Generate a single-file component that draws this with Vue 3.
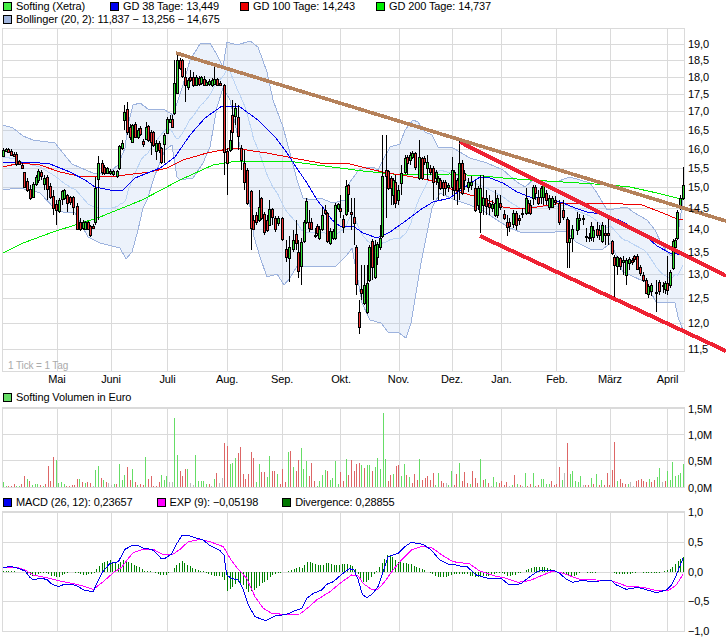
<script setup>
// price chart screen: all coordinates are page pixels, each svg sets its viewBox to its own slice of the page
const left = 2.5;
const right = 684.5;
const monthX = [57, 111, 167, 227, 282, 340, 399, 452, 501, 556, 610, 667];
const months = [
  ["Mai", 57], ["Juni", 111], ["Juli", 167.5], ["Aug.", 227], ["Sep.", 282], ["Okt.", 341],
  ["Nov.", 398.5], ["Dez.", 452], ["Jan.", 501.5], ["Feb.", 557], ["März", 610], ["April", 667.5],
];
const priceAxis = [
  ["19,0", 44], ["18,5", 60], ["18,0", 77], ["17,5", 94], ["17,0", 111], ["16,5", 130], ["16,0", 149], ["15,5", 168],
  ["15,0", 187], ["14,5", 208], ["14,0", 229], ["13,5", 252], ["13,0", 274], ["12,5", 298], ["12,0", 323], ["11,5", 349],
];
const volumeAxis = [["1,5M", 408], ["1,0M", 434], ["0,5M", 460], ["0,0M", 487]];
const macdAxis = [["1,0", 512], ["0,5", 542], ["0,0", 572], ["−0,5", 601], ["−1,0", 631]];

const priceLegend = [
  [
    { color: "#44ee44", label: "Softing (Xetra)" },
    { color: "#0000ee", label: "GD 38 Tage: 13,449" },
    { color: "#ee0000", label: "GD 100 Tage: 14,243" },
    { color: "#00ee00", label: "GD 200 Tage: 14,737" },
  ],
  [{ color: "#9fb3dc", label: "Bollinger (20, 2): 11,837 − 13,256 − 14,675" }],
];
const macdLegend = [
  { color: "#0000ee", label: "MACD (26, 12): 0,23657" },
  { color: "#ff00ff", label: "EXP (9): −0,05198" },
  { color: "#007700", label: "Divergence: 0,28855" },
];

// [x, body top, body bottom, wick top, wick bottom, green?]
const candles = [
  [3,150,156,148,157,1],[6,149,151,148,152,1],[8,149,152,148,153,0],[11,151,155,149,156,0],[14,154,156,152,157,0],[16,154,164,152,166,0],[19,161,164,160,165,0],[22,165,168,163,169,0],
  [24,172,187,172,188,0],[27,181,190,178,192,0],[30,189,198,185,200,0],[33,184,197,182,198,1],[36,177,184,175,186,1],[38,171,180,169,183,1],[41,172,176,170,180,0],[44,178,184,175,190,1],[47,177,189,175,200,0],[50,186,197,183,199,0],
  [53,196,208,190,215,0],[56,204,210,200,225,0],[59,200,211,198,213,1],[62,191,199,190,205,1],[64,190,198,189,200,1],[67,195,203,194,212,0],[70,197,202,196,205,0],[73,197,207,196,215,0],[77,206,229,203,230,0],[80,222,229,218,231,0],[83,222,228,220,230,1],[85,222,229,221,230,1],[88,222,229,221,230,0],[90,226,235,225,237,0],[93,226,228,224,229,0],
  [95,188,222,177,225,1],[98,163,179,156,220,1],[102,163,172,160,175,0],[104,167,173,165,175,0],[107,168,173,167,174,1],[110,171,173,169,175,1],[113,171,174,170,176,1],[117,171,176,170,178,1],[119,146,168,145,170,1],[122,143,148,140,150,1],
  [124,112,120,105,130,1],[127,109,132,102,135,0],[130,127,137,124,140,0],[132,125,142,124,143,1],[135,124,137,122,138,0],[138,130,137,128,139,1],[140,128,134,126,136,0],[143,141,144,139,147,0],[146,127,139,122,140,1],[148,126,140,125,142,0],[151,132,142,130,155,0],[153,132,145,131,147,0],[156,143,151,140,160,1],[159,143,150,141,153,0],[161,148,162,147,164,0],[164,135,144,133,163,1],[167,119,133,117,134,1],[170,119,122,115,123,1],[172,119,127,115,128,0],
  [174,83,113,60,115,1],[177,60,93,55,94,1],[180,60,68,58,70,0],[182,60,76,59,78,0],[185,77,85,68,102,0],[188,80,87,78,90,1],[190,77,80,70,82,0],[193,77,85,72,87,0],[196,77,85,75,86,1],[199,78,84,76,86,0],[201,77,83,76,85,1],[204,79,85,76,86,0],[206,82,85,80,86,1],[209,81,84,79,86,1],[212,80,85,78,87,1],[214,79,84,67,85,1],[217,79,85,78,86,0],[220,83,85,81,86,0],
  [224,85,152,84,175,0],[227,151,163,148,195,0],[230,140,150,130,152,1],[232,115,132,100,150,0],[235,108,116,103,125,1],[238,117,136,105,150,0],[241,148,160,145,170,0],[244,163,182,150,190,0],[247,170,203,168,205,0],
  [251,191,228,190,250,0],[253,220,229,215,230,0],[256,215,222,212,225,0],[259,207,220,190,222,1],[261,198,218,197,220,0],[264,214,232,212,235,0],[267,220,230,215,232,0],[269,209,225,200,226,1],[272,209,217,208,225,0],[275,218,229,216,232,0],[278,218,223,216,226,1],[282,218,239,217,241,0],[286,249,257,240,262,0],[289,247,258,236,282,1],[293,240,249,230,252,1],[296,234,243,220,250,0],[298,252,271,240,278,0],[301,242,266,238,285,1],[304,222,241,220,243,1],[306,201,222,198,224,1],[309,222,228,210,232,0],[311,222,229,218,230,0],[315,235,236,228,238,0],[317,226,233,224,236,0],[319,229,238,226,240,1],[322,215,229,207,231,1],[325,210,213,205,215,0],[327,213,241,212,243,0],[330,231,243,228,245,1],[333,231,238,229,240,1],[335,205,238,203,240,1],[338,204,208,203,210,1],[340,208,211,195,218,0],[343,219,227,215,233,0],[346,186,214,180,216,1],[348,185,194,184,212,0],[351,212,214,198,230,0],[354,217,223,198,245,0],
  [356,247,284,245,295,0],[359,312,327,300,334,0],[361,289,293,265,300,0],[364,285,303,265,305,1],[367,283,312,265,314,1],[369,247,280,245,282,1],[372,241,267,239,280,0],[375,245,277,240,279,1],[377,244,257,242,265,1],[380,238,247,225,250,1],[382,176,236,135,238,1],[386,170,176,135,218,0],[388,171,188,170,190,0],[391,178,188,176,205,0],[393,180,195,178,205,1],[395,182,203,175,208,0],[398,190,200,185,205,1],[401,173,183,165,195,1],[405,158,172,155,174,1],[407,157,163,155,175,0],[410,155,160,152,165,1],[412,153,157,151,159,1],[415,153,167,152,170,0],[419,157,178,140,180,1],[422,158,178,157,180,0],[424,158,162,156,165,0],[427,162,168,155,180,1],[430,168,172,165,175,0],[433,168,182,166,200,0],[436,172,178,170,185,1],[438,178,182,176,200,1],[440,180,188,178,190,0],[443,182,188,180,196,0],[445,182,188,180,195,0],[448,185,187,183,192,1],[452,170,187,157,195,1],[454,172,190,170,200,0],[457,180,190,178,205,0],[459,163,188,140,200,1],[462,163,193,160,195,0],[464,173,180,170,190,0],[468,182,187,178,192,1],[471,182,185,176,190,1],
  [475,188,210,180,212,0],[478,188,205,186,210,1],[480,188,212,175,233,1],[483,198,205,175,215,1],[486,198,206,190,215,0],[489,203,207,195,215,0],[492,204,208,200,212,1],[495,203,215,190,217,1],[497,198,215,195,218,1],[500,203,207,195,210,0],[504,214,218,210,220,0],[507,222,227,215,236,0],[509,222,226,218,232,0],[513,213,224,210,228,1],[516,213,225,211,230,0],[519,218,220,215,225,0],[522,213,214,208,218,1],[526,198,213,188,215,1],[528,203,212,200,214,0],
  [530,205,213,200,215,0],[533,187,198,185,205,1],[535,187,193,185,200,0],[538,197,203,190,205,0],[541,188,197,186,204,1],[543,185,197,182,205,1],[546,193,200,190,205,0],[549,198,207,195,210,1],[552,198,207,196,208,1],[555,200,202,196,205,0],[559,203,222,200,225,0],[563,210,217,200,220,0],[567,219,242,217,268,0],[569,238,242,220,268,1],[572,229,238,225,252,1],[577,218,230,212,235,1],[579,218,220,214,230,1],[583,218,219,215,225,0],[586,236,237,228,242,0],[589,237,238,233,242,0],[591,226,237,222,241,1],[593,230,237,226,242,1],[597,229,235,222,238,0],[599,230,235,225,240,0],[602,225,241,222,243,1],[605,233,235,225,245,0],[608,233,235,217,245,0],
  [612,241,253,240,255,0],[614,257,265,255,298,0],[617,257,266,256,275,1],[620,258,266,257,270,0],[623,260,262,256,275,1],[626,260,275,258,285,1],[629,259,263,257,270,1],[632,260,262,258,265,0],[634,256,259,255,262,0],[637,256,269,254,270,0],[640,267,273,265,276,0],[643,275,280,272,282,0],[646,280,293,278,294,0],[648,286,294,284,298,1],[651,285,291,283,296,1],[656,292,293,280,312,0],[659,282,291,280,295,0],[663,285,286,282,293,0],[665,283,289,281,294,1],[667,283,290,256,295,0],[670,272,285,270,288,1],[673,241,268,239,270,1],[675,240,247,238,250,1],[677,212,238,210,240,1],[680,198,208,195,210,1],[683,185,198,167,200,1],
];

const gd38 = [[3,163],[20,162],[40,163],[50,164],[70,172],[85,180],[95,187],[110,190],[122,191],[135,178],[160,168],[175,157],[190,135],[205,118],[222,106],[240,107],[258,120],[275,137],[285,150],[298,170],[307,183],[317,200],[325,210],[332,220],[340,226],[353,226],[363,233],[377,238],[390,232],[407,220],[420,210],[433,202],[450,198],[458,192],[468,185],[480,177],[490,178],[503,183],[517,192],[530,197],[547,198],[563,203],[575,208],[587,212],[607,215],[623,222],[642,233],[657,246],[670,253],[683,255]];
const gd100 = [[3,167],[20,163],[40,165],[60,172],[83,177],[117,176],[150,172],[167,168],[183,160],[207,153],[233,148],[267,153],[293,158],[320,163],[350,164],[370,169],[387,173],[420,178],[437,182],[453,190],[470,195],[483,198],[503,207],[517,209],[530,208],[563,203],[587,203],[603,203],[642,205],[663,213],[677,219],[683,219]];
const gd200 = [[3,253],[23,243],[53,232],[75,225],[100,217],[142,200],[180,180],[213,165],[237,161],[287,161],[317,165],[363,171],[403,175],[450,174],[483,176],[503,178],[530,180],[563,182],[610,185],[630,187],[657,193],[677,198],[683,200]];
const bandUpper = [[3,125],[13,128],[23,136],[33,140],[55,143],[63,153],[72,164],[95,174],[110,172],[118,165],[125,148],[128,125],[133,105],[140,103],[148,109],[165,110],[173,115],[183,85],[190,60],[200,44],[210,43],[217,55],[223,67],[227,42],[237,45],[250,41],[258,47],[267,72],[273,100],[283,127],[290,153],[297,180],[303,198],[312,200],[320,198],[333,203],[345,200],[350,182],[358,171],[363,167],[373,167],[378,170],[383,160],[390,147],[400,144],[405,130],[413,120],[418,122],[425,132],[432,135],[438,147],[453,148],[470,158],[487,163],[503,170],[517,182],[525,187],[533,180],[556,182],[570,177],[580,180],[590,183],[597,193],[607,210],[627,207],[633,212],[647,220],[655,230],[662,245],[671,256],[677,240],[683,200]];
const bandLower = [[3,190],[17,188],[30,190],[40,193],[55,209],[63,212],[75,213],[80,222],[88,237],[100,243],[120,248],[126,259],[132,252],[138,230],[143,208],[147,200],[155,175],[165,150],[172,145],[177,177],[180,180],[193,178],[203,163],[210,147],[217,107],[223,88],[230,100],[245,170],[254,237],[260,257],[267,277],[277,274],[284,285],[290,278],[297,266],[307,266],[327,266],[335,267],[347,255],[352,248],[358,280],[362,303],[370,320],[381,323],[388,332],[398,332],[406,338],[411,323],[421,263],[432,208],[440,193],[455,200],[470,205],[485,212],[497,220],[510,228],[520,232],[555,232],[566,231],[576,242],[590,249],[603,249],[611,243],[623,272],[630,275],[645,282],[656,302],[675,303],[678,317],[683,330]];

// volume: colour letter (g, r, x = grey) plus bar height in px, one bar per trading day
const volumeData = "g5 g1 r1 r1 r3 g1 g1 r3 r11 g8 r6 g2 g3 g3 r2 g1 r3 r21 r6 r30 g27 g4 g5 g3 r1 r1 r2 r2 r8 g8 r5 g4 r5 r4 x1 g17 g21 r9 g7 r5 x4 x2 g3 r3 g23 g7 g12 r20 r7 g18 r5 g2 r3 r2 g30 r8 r11 r1 r1 r5 g12 g7 g11 x5 x5 g69 g32 r16 r11 r18 g18 x4 x2 g32 g6 g6 g6 g3 r3 x1 g8 r14 x4 x9 r44 r41 g23 g24 g29 r34 r40 r13 r8 r13 r35 r29 g5 g23 r15 r15 g10 g31 r16 r16 g13 r3 r18 r5 g35 r36 g20 r16 r27 g39 g18 g26 r11 r24 r6 g1 g6 g12 g17 r16 g7 g9 g26 g3 r15 r6 g28 r12 r27 r16 r23 r24 g22 r19 g22 g22 r16 g20 g29 g18 g74 g28 r6 r12 g13 r21 r22 g11 g23 r12 g10 r4 r13 r7 g28 r7 r9 r11 r7 r14 g2 g14 r6 r4 x4 g2 g16 r2 r13 g24 r6 r15 r4 g3 r16 r9 r4 g28 r7 g8 r4 x1 g10 g5 r4 r6 r2 r5 x1 g2 r12 g3 r2 x1 g14 r1 r3 g14 r1 r2 g8 g8 g3 g3 r6 r2 r3 r20 g7 x14 r44 g13 g16 g6 g5 g11 x2 r2 r2 g9 r3 g13 r2 g7 r2 r14 r2 r17 r45 g6 r8 r4 r3 g3 x5 x1 r6 r7 r8 r6 r5 g8 r5 r7 g10 g19 x5 r6 g16 g7 g25 g11 g12 g14 g23".split(" ");
const volumeBars = volumeData.map((item, i) => ({
  x: Math.round(3 + (i * 680) / (volumeData.length - 1)),
  height: Number(item.slice(1)),
  color: { g: "#66dd66", r: "#dd6666", x: "#bbbbbb" }[item[0]],
}));

// MACD curves were traced at 3x, in two halves starting at x 0 and x 363
function traced(points, originX) {
  return points.map(([x, y]) => [originX + x / 3, 490 + y / 3]);
}
const macdLine = [
  ...traced([[10,232],[35,230],[55,235],[75,243],[90,262],[100,270],[120,265],[140,268],[155,282],[175,290],[195,282],[215,282],[235,290],[255,302],[280,304],[295,270],[310,243],[330,220],[355,215],[375,178],[395,167],[415,167],[430,175],[455,178],[470,190],[483,205],[495,205],[515,192],[525,170],[545,137],[565,136],[585,143],[610,150],[630,167],[660,182],[672,195],[680,255],[695,265],[715,270],[730,300],[745,345],[765,380],[797,392],[825,378],[860,373],[885,362],[905,355],[920,325],[940,310],[965,300],[980,283],[1000,275],[1025,253],[1048,236],[1062,240],[1075,270],[1085,308]], 0),
  ...traced([[0,315],[12,323],[30,310],[45,290],[60,245],[75,200],[90,195],[105,190],[125,170],[145,157],[160,160],[180,163],[205,180],[230,210],[255,222],[270,222],[290,228],[310,228],[340,255],[375,265],[415,265],[435,282],[455,285],[475,280],[490,268],[515,250],[535,240],[570,240],[590,250],[610,268],[630,277],[660,270],[680,275],[710,273],[745,272],[760,285],[790,298],[825,292],[860,302],[880,308],[910,300],[925,285],[940,255],[960,205]], 363),
];
const expLine = [
  ...traced([[10,233],[55,233],[75,240],[100,255],[140,263],[175,272],[215,280],[250,288],[280,298],[310,275],[340,248],[365,232],[385,205],[400,188],[430,178],[460,178],[485,192],[520,192],[540,178],[565,155],[600,148],[630,155],[670,170],[690,205],[710,232],[740,265],[765,320],[790,355],[815,370],[850,373],[900,372],[925,352],[950,330],[990,305],[1020,280],[1055,255],[1075,258]], 0),
  ...traced([[0,280],[25,298],[45,298],[65,275],[90,240],[120,205],[145,180],[175,170],[205,172],[240,197],[270,215],[320,222],[350,243],[395,258],[430,265],[465,277],[500,272],[535,257],[570,243],[600,250],[650,268],[700,270],[745,272],[790,288],[840,292],[880,302],[915,302],[940,285],[960,253]], 363),
];

function valueAt(line, x) {
  for (let i = 1; i < line.length; i++) {
    if (x <= line[i][0]) {
      const [x0, y0] = line[i - 1];
      const [x1, y1] = line[i];
      return y0 + ((y1 - y0) * (x - x0)) / (x1 - x0);
    }
  }
  return line[line.length - 1][1];
}

function toPoints(line) {
  return line.map(([x, y]) => `${x},${y}`).join(" ");
}

const sampleX = Array.from({ length: 256 }, (_, i) => 3 + (i * 680) / 255);
const bandFill = toPoints([...bandUpper, ...[...bandLower].reverse()]);
const bandMiddle = toPoints(sampleX.map((x) => [x, (valueAt(bandUpper, x) + valueAt(bandLower, x)) / 2]));

const divergence = sampleX.map((x) => ({
  x: Math.round(x),
  y: 571.5 + (valueAt(macdLine, x) - valueAt(expLine, x)) * 0.9,
}));
</script>

<template>
  <main class="page">
    <div class="legend legend--price">
      <div v-for="(row, r) in priceLegend" :key="r" class="legend__row">
        <span v-for="item in row" :key="item.label" class="legend__item">
          <i class="legend__swatch" :style="{ background: item.color }"></i>{{ item.label }}
        </span>
      </div>
    </div>

    <svg class="chart" width="726" height="359" viewBox="0 27 726 359">
      <g class="grid">
        <line v-for="x in monthX" :key="x" :x1="x + 0.5" y1="28" :x2="x + 0.5" y2="372" />
        <line v-for="tick in priceAxis" :key="tick[0]" :x1="left" :y1="tick[1] + 0.5" :x2="right" :y2="tick[1] + 0.5" />
        <rect :x="left" y="28.5" :width="right - left" height="343" />
      </g>
      <polygon class="band" :points="bandFill" />
      <polyline class="band-line" :points="toPoints(bandUpper)" />
      <polyline class="band-line" :points="toPoints(bandLower)" />
      <polyline class="band-middle" :points="bandMiddle" />
      <polyline class="ma ma--green" :points="toPoints(gd200)" />
      <polyline class="ma ma--red" :points="toPoints(gd100)" />
      <polyline class="ma ma--blue" :points="toPoints(gd38)" />
      <g v-for="c in candles" :key="c[0]">
        <rect class="wick" :x="c[0]" :y="c[3]" width="1" :height="c[4] - c[3]" />
        <rect class="wick" :x="c[0] - 1" :y="c[1]" width="3" :height="c[2] - c[1] + 1" />
        <rect :class="c[5] ? 'body--up' : 'body--down'" :x="c[0]" :y="c[1] + 1" width="1" :height="Math.max(c[2] - c[1] - 1, 0)" />
      </g>
      <line class="trend trend--red" x1="460" y1="142" x2="726" y2="276" />
      <line class="trend trend--red" x1="480" y1="236" x2="726" y2="351" />
      <line class="trend trend--brown" x1="176" y1="53" x2="726" y2="221" />
      <text class="tick-note" x="8" y="369">1 Tick = 1 Tag</text>
      <text v-for="m in months" :key="m[0]" class="label" text-anchor="middle" :x="m[1]" y="383">{{ m[0] }}</text>
      <text v-for="tick in priceAxis" :key="tick[0]" class="label" x="688" :y="tick[1] + 4">{{ tick[0] }}</text>
    </svg>

    <div class="legend legend--volume">
      <div class="legend__row">
        <span class="legend__item"><i class="legend__swatch" style="background: #66dd66"></i>Softing Volumen in Euro</span>
      </div>
    </div>

    <svg class="chart" width="726" height="89" viewBox="0 407 726 89">
      <g class="grid">
        <line v-for="x in monthX" :key="x" :x1="x + 0.5" y1="408" :x2="x + 0.5" y2="487" />
        <line v-for="tick in volumeAxis" :key="tick[0]" :x1="left" :y1="tick[1] + 0.5" :x2="right" :y2="tick[1] + 0.5" />
        <rect :x="left" y="407.5" :width="right - left" height="80" />
      </g>
      <rect v-for="(bar, i) in volumeBars" :key="i" :x="bar.x" :y="487 - bar.height" width="1" :height="bar.height" :fill="bar.color" />
      <text v-for="tick in volumeAxis" :key="tick[0]" class="label" x="688" :y="tick[1] + 5">{{ tick[0] }}</text>
    </svg>

    <div class="legend legend--macd">
      <div class="legend__row">
        <span v-for="item in macdLegend" :key="item.label" class="legend__item">
          <i class="legend__swatch" :style="{ background: item.color }"></i>{{ item.label }}
        </span>
      </div>
    </div>

    <svg class="chart" width="726" height="129" viewBox="0 511 726 129">
      <g class="grid">
        <line v-for="x in monthX" :key="x" :x1="x + 0.5" y1="512" :x2="x + 0.5" y2="631" />
        <line v-for="tick in macdAxis" :key="tick[0]" :x1="left" :y1="tick[1] + 0.5" :x2="right" :y2="tick[1] + 0.5" />
        <rect :x="left" y="511.5" :width="right - left" height="120" />
      </g>
      <line
        v-for="(bar, i) in divergence"
        :key="i"
        class="divergence"
        :x1="bar.x + 0.5"
        y1="571.5"
        :x2="bar.x + 0.5"
        :y2="bar.y"
      />
      <polyline class="ma ma--pink" :points="toPoints(expLine)" />
      <polyline class="ma ma--blue" :points="toPoints(macdLine)" />
      <text v-for="tick in macdAxis" :key="tick[0]" class="label" x="688" :y="tick[1] + 4">{{ tick[0] }}</text>
    </svg>
  </main>
</template>

<style scoped>
.page {
  width: 726px;
  height: 640px;
  background: #fff;
  overflow: hidden;
  font-family: "Liberation Sans", Arial, sans-serif;
  font-size: 11px;
  letter-spacing: -0.12px;
  color: #000;
}

.legend__row {
  display: flex;
  gap: 24px;
  height: 13px;
  padding-left: 3px;
}

.legend__item {
  display: flex;
  align-items: center;
  gap: 4px;
  line-height: 13px;
  white-space: nowrap;
}

.legend__swatch {
  width: 7px;
  height: 7px;
  border: 1px solid #000;
  flex: none;
}

.legend--price {
  height: 27px;
}

.legend--price .legend__row:first-child {
  display: grid;
  grid-template-columns: 107px 130px 136px auto;
  gap: 0;
}

.legend--volume {
  height: 21px;
  padding-top: 5px;
  box-sizing: border-box;
}

.legend--macd {
  height: 15px;
}

.chart {
  display: block;
  overflow: visible;
}

.grid line,
.grid rect {
  stroke: #dadada;
  stroke-width: 1;
  fill: none;
  shape-rendering: crispEdges;
}

.band {
  fill: #a8c4ee;
  fill-opacity: 0.22;
  stroke: none;
}

.band-line {
  fill: none;
  stroke: #9db3de;
  stroke-width: 1;
  shape-rendering: crispEdges;
}

.band-middle {
  fill: none;
  stroke: #bcd4f4;
  stroke-width: 1;
  shape-rendering: crispEdges;
}

.ma {
  fill: none;
  stroke-width: 1;
  shape-rendering: crispEdges;
}

.ma--blue {
  stroke: #0000ee;
}

.ma--red {
  stroke: #ee0000;
}

.ma--green {
  stroke: #00ee00;
}

.ma--pink {
  stroke: #ff00ff;
}

.wick {
  fill: #000;
  shape-rendering: crispEdges;
}

.body--up {
  fill: #33dd33;
  shape-rendering: crispEdges;
}

.body--down {
  fill: #ee3333;
  shape-rendering: crispEdges;
}

.trend {
  stroke-width: 3.6;
  shape-rendering: crispEdges;
}

.trend--red {
  stroke: #ee2233;
  stroke-width: 4;
}

.trend--brown {
  stroke: #b5815a;
}

.divergence {
  stroke: #008000;
  stroke-width: 1;
  shape-rendering: crispEdges;
}

.label {
  font-size: 11px;
  fill: #000;
}

.tick-note {
  font-size: 10px;
  fill: #aaa;
}
</style>
